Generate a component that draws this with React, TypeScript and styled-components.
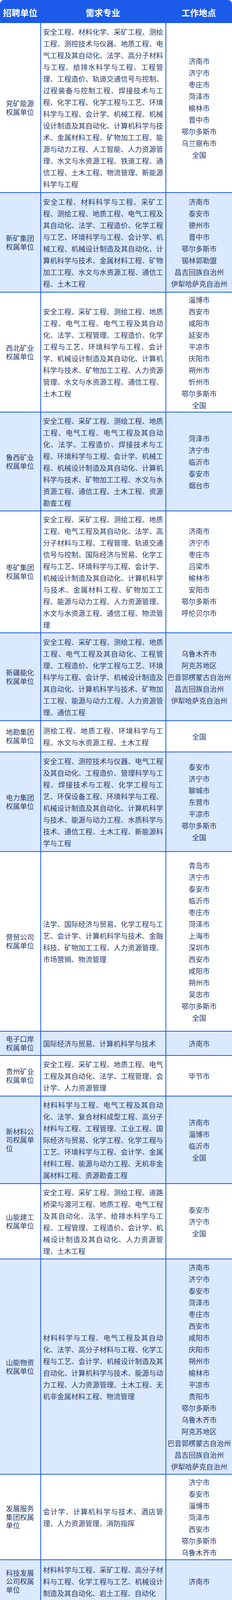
import * as React from 'react';
import styled, { createGlobalStyle } from 'styled-components';

const GlobalStyle = createGlobalStyle`
  html, body {
    margin: 0;
    padding: 0;
    background: #ffffff;
  }
  body {
    font-family: "Noto Sans CJK SC", "Noto Sans", sans-serif;
    color: #283c6e;
  }
  * {
    box-sizing: border-box;
  }
`;

const BLUE = '#1c5ae9';
const LIGHT = '#dbe9fd';

const Table = styled.div`
  width: 593px;
  display: flex;
  flex-direction: column;
`;

const Header = styled.div`
  display: grid;
  grid-template-columns: 103px 320px 1fr;
  height: 57px;
  padding-top: 4px;
  background: ${BLUE};
  border-radius: 10px 10px 0 0;
`;

const HeadCell = styled.div`
  display: flex;
  align-items: center;
  justify-content: center;
  font-size: 22px;
  font-weight: 700;
  color: #ffffff;
  white-space: nowrap;
`;

const Row = styled.div<{ $alt: boolean; $h: number }>`
  display: grid;
  grid-template-columns: 103px 320px 1fr;
  min-height: ${(p) => p.$h}px;
  border-top: 2px solid ${BLUE};
  background: ${(p) => (p.$alt ? LIGHT : '#ffffff')};
`;

const UnitCell = styled.div`
  display: flex;
  align-items: center;
  padding: 2px 10px 2px 15px;
  font-size: 18px;
  line-height: 1.2;
`;

const UnitText = styled.div`
  width: 100%;
  text-align: left;
`;

const MajorCell = styled.div`
  display: flex;
  align-items: center;
  padding: 2px 6px 2px 5px;
  border-left: 2px solid ${BLUE};
`;

const MajorText = styled.p`
  margin: 0;
  width: 100%;
  font-size: 18px;
  line-height: 30px;
  text-align: justify;
`;

const PlaceCell = styled.div`
  display: flex;
  flex-direction: column;
  align-items: center;
  justify-content: center;
  padding: 2px 2px;
  border-left: 2px solid ${BLUE};
`;

const Place = styled.div`
  font-size: 18px;
  line-height: 30px;
  white-space: nowrap;
`;

interface Entry {
  unit: string;
  majors: string;
  places: string[];
  h: number;
}

const rows: Entry[] = [
  {
    unit: '兖矿能源权属单位',
    majors:
      '安全工程、材料化学、采矿工程、测绘工程、测控技术与仪器、地质工程、电气工程及其自动化、法学、高分子材料与工程、给排水科学与工程、工程管理、工程造价、轨道交通信号与控制、过程装备与控制工程、焊接技术与工程、化学工程、化学工程与工艺、环境科学与工程、会计学、机械工程、机械设计制造及其自动化、计算机科学与技术、金属材料工程、矿物加工工程、能源与动力工程、人工智能、人力资源管理、水文与水资源工程、铁道工程、通信工程、土木工程、物流管理、新能源科学与工程',
    places: ['济南市', '济宁市', '枣庄市', '菏泽市', '榆林市', '晋中市', '鄂尔多斯市', '乌兰察布市', '全国'],
    h: 435,
  },
  {
    unit: '新矿集团权属单位',
    majors:
      '安全工程、材料科学与工程、采矿工程、测绘工程、地质工程、电气工程及其自动化、法学、工程造价、化学工程与工艺、环境科学与工程、会计学、机械工程、机械设计制造及其自动化、计算机科学与技术、金属材料工程、矿物加工工程、水文与水资源工程、通信工程、土木工程',
    places: ['济南市', '泰安市', '德州市', '晋中市', '鄂尔多斯市', '锡林郭勒盟', '昌吉回族自治州', '伊犁哈萨克自治州'],
    h: 255,
  },
  {
    unit: '西北矿业权属单位',
    majors:
      '安全工程、采矿工程、测绘工程、地质工程、电气工程、电气工程及其自动化、法学、工程管理、工程造价、化学工程与工艺、环境科学与工程、会计学、机械设计制造及其自动化、计算机科学与技术、矿物加工工程、人力资源管理、水文与水资源工程、通信工程、土木工程',
    places: ['淄博市', '西安市', '咸阳市', '延安市', '平凉市', '庆阳市', '朔州市', '忻州市', '鄂尔多斯市', '全国'],
    h: 307,
  },
  {
    unit: '鲁西矿业权属单位',
    majors:
      '安全工程、采矿工程、测绘工程、地质工程、电气工程、电气工程及其自动化、法学、工程造价、焊接技术与工程、环境科学与工程、会计学、机械工程、机械设计制造及其自动化、计算机科学与技术、矿物加工工程、水文与水资源工程、通信工程、土木工程、资源勘查工程',
    places: ['菏泽市', '济宁市', '临沂市', '泰安市', '烟台市'],
    h: 253,
  },
  {
    unit: '枣矿集团权属单位',
    majors:
      '安全工程、采矿工程、测绘工程、地质工程、电气工程及其自动化、法学、高分子材料与工程、工程管理、轨道交通信号与控制、国际经济与贸易、化学工程与工艺、环境科学与工程、会计学、机械设计制造及其自动化、计算机科学与技术、金属材料工程、矿物加工工程、能源与动力工程、人力资源管理、水文与水资源工程、通信工程、物流管理',
    places: ['济南市', '济宁市', '枣庄市', '吕梁市', '榆林市', '安阳市', '鄂尔多斯市', '呼伦贝尔市'],
    h: 312,
  },
  {
    unit: '新疆能化权属单位',
    majors:
      '安全工程、采矿工程、测绘工程、地质工程、电气工程及其自动化、工程管理、工程造价、化学工程与工艺、环境科学与工程、会计学、机械设计制造及其自动化、计算机科学与技术、矿物加工工程、能源与动力工程、人力资源管理、通信工程',
    places: ['乌鲁木齐市', '阿克苏地区', '巴音郭楞蒙古自治州', '昌吉回族自治州', '伊犁哈萨克自治州'],
    h: 225,
  },
  {
    unit: '地勘集团权属单位',
    majors: '测绘工程、地质工程、环境科学与工程、水文与水资源工程、土木工程',
    places: ['全国'],
    h: 80,
  },
  {
    unit: '电力集团权属单位',
    majors:
      '安全工程、测控技术与仪器、电气工程及其自动化、工程造价、管理科学与工程、焊接技术与工程、化学工程与工艺、环保设备工程、环境科学与工程、机械设计制造及其自动化、计算机科学与技术、能源与动力工程、水质科学与技术、通信工程、土木工程、新能源科学与工程',
    places: ['泰安市', '济宁市', '聊城市', '东营市', '平凉市', '鄂尔多斯市', '全国'],
    h: 255,
  },
  {
    unit: '营贸公司权属单位',
    majors:
      '法学、国际经济与贸易、化学工程与工艺、会计学、计算机科学与技术、金融科技、矿物加工工程、人力资源管理、市场营销、物流管理',
    places: ['青岛市', '济宁市', '泰安市', '临沂市', '枣庄市', '菏泽市', '上海市', '深圳市', '西安市', '咸阳市', '朔州市', '吴忠市', '鄂尔多斯市', '全国'],
    h: 460,
  },
  {
    unit: '电子口岸权属单位',
    majors: '国际经济与贸易、计算机科学与技术',
    places: ['济南市'],
    h: 62,
  },
  {
    unit: '贵州矿业权属单位',
    majors: '安全工程、采矿工程、地质工程、电气工程及其自动化、法学、工程管理、会计学、人力资源管理',
    places: ['毕节市'],
    h: 104,
  },
  {
    unit: '新材料公司权属单位',
    majors:
      '材料科学与工程、电气工程及其自动化、法学、复合材料成型工程、高分子材料与工程、工程管理、工业工程、国际经济与贸易、化学工程、化学工程与工艺、环境科学与工程、会计学、金属材料工程、能源与动力工程、无机非金属材料工程、资源勘查工程',
    places: ['济南市', '淄博市', '临沂市', '全国'],
    h: 224,
  },
  {
    unit: '山能建工权属单位',
    majors:
      '安全工程、采矿工程、测绘工程、道路桥梁与渡河工程、地质工程、电气工程及其自动化、法学、给排水科学与工程、工程管理、工程造价、会计学、机械设计制造及其自动化、人力资源管理、土木工程',
    places: ['泰安市', '济宁市', '全国'],
    h: 193,
  },
  {
    unit: '山能物资权属单位',
    majors:
      '材料科学与工程、电气工程及其自动化、法学、高分子材料与工程、化学工程与工艺、会计学、机械设计制造及其自动化、计算机科学与技术、能源与动力工程、人力资源管理、土木工程、无机非金属材料工程、物流管理',
    places: [
      '济南市', '济宁市', '泰安市', '菏泽市', '枣庄市', '西安市', '咸阳市', '庆阳市', '朔州市',
      '榆林市', '平凉市', '贵阳市', '鄂尔多斯市', '乌鲁木齐市', '阿克苏地区', '巴音郭楞蒙古自治州',
      '昌吉回族自治州', '伊犁哈萨克自治州',
    ],
    h: 551,
  },
  {
    unit: '发展服务集团权属单位',
    majors: '会计学、计算机科学与技术、酒店管理、人力资源管理、消防指挥',
    places: ['济宁市', '泰安市', '淄博市', '菏泽市', '西安市', '鄂尔多斯市', '乌鲁木齐市'],
    h: 219,
  },
  {
    unit: '科技发展公司权属单位',
    majors:
      '材料科学与工程、采矿工程、高分子材料与工程、化学工程与工艺、机械设计制造及其自动化、岩土工程、自动化',
    places: ['济南市'],
    h: 110,
  },
  {
    unit: '榆林国重',
    majors: '化学工程与工艺',
    places: ['榆林市'],
    h: 43,
  },
];

const App = () => {
  return (
    <>
      <GlobalStyle />
      <Table>
        <Header>
          <HeadCell>招聘单位</HeadCell>
          <HeadCell>需求专业</HeadCell>
          <HeadCell>工作地点</HeadCell>
        </Header>
        {rows.map((r, i) => (
          <Row key={r.unit} $alt={i % 2 === 1} $h={r.h}>
            <UnitCell>
              <UnitText>{r.unit}</UnitText>
            </UnitCell>
            <MajorCell>
              <MajorText>{r.majors}</MajorText>
            </MajorCell>
            <PlaceCell>
              {r.places.map((p, j) => (
                <Place key={j}>{p}</Place>
              ))}
            </PlaceCell>
          </Row>
        ))}
      </Table>
    </>
  );
};

export default App;
